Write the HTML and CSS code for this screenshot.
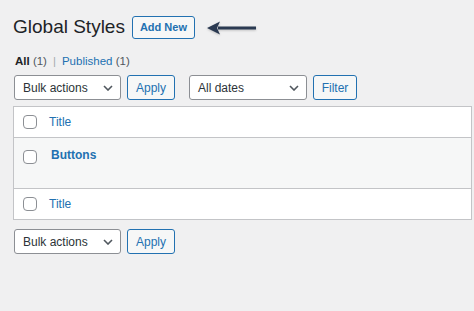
FILE: index.html
```html
<!DOCTYPE html>
<html lang="en">
<head>
  <meta charset="UTF-8" />
  <title>Global Styles</title>
  <link rel="stylesheet" href="styles.css">
</head>
<body>
  <div class="wrap">
    <div class="page-head">
      <h1>Global Styles</h1>
      <a class="btn add-new" href="#">Add New</a>
      <svg class="arrow" width="52" height="16" viewBox="0 0 52 16">
        <path d="M50 8 H12" stroke="#2b3a52" stroke-width="3.2" fill="none"/>
        <path d="M1 8 L14 1.5 L11 8 L14 14.5 Z" fill="#2b3a52"/>
      </svg>
    </div>

    <ul class="subsubsub">
      <li class="current">All <span class="count">(1)</span></li>
      <li class="sep">|</li>
      <li><a href="#">Published</a> <span class="count">(1)</span></li>
    </ul>

    <div class="tablenav">
      <div class="select bulk">
        <span>Bulk actions</span>
        <svg width="10" height="6" viewBox="0 0 10 6"><path d="M1 1 L5 5 L9 1" stroke="#50575e" stroke-width="1.6" fill="none"/></svg>
      </div>
      <button class="btn apply">Apply</button>
      <div class="select dates">
        <span>All dates</span>
        <svg width="10" height="6" viewBox="0 0 10 6"><path d="M1 1 L5 5 L9 1" stroke="#50575e" stroke-width="1.6" fill="none"/></svg>
      </div>
      <button class="btn filter">Filter</button>
    </div>

    <div class="list-table">
      <div class="row head">
        <span class="check"></span>
        <a href="#">Title</a>
      </div>
      <div class="row item">
        <span class="check"></span>
        <a class="row-title" href="#">Buttons</a>
      </div>
      <div class="row foot">
        <span class="check"></span>
        <a href="#">Title</a>
      </div>
    </div>

    <div class="tablenav bottom">
      <div class="select bulk">
        <span>Bulk actions</span>
        <svg width="10" height="6" viewBox="0 0 10 6"><path d="M1 1 L5 5 L9 1" stroke="#50575e" stroke-width="1.6" fill="none"/></svg>
      </div>
      <button class="btn apply">Apply</button>
    </div>
  </div>
</body>
</html>
```

FILE: styles.css
```css
body {
  margin: 0;
  background: #f0f0f1;
  color: #1d2327;
  font-family: "Liberation Sans", Arial, sans-serif;
  font-size: 12px;
  height: 311px;
  overflow: hidden;
}

a {
  color: #2271b1;
  text-decoration: none;
}

.wrap {
  padding: 16px 0 0 13px;
}

.page-head {
  display: flex;
  align-items: center;
  height: 22px;
}

.page-head h1 {
  margin: 0;
  font-size: 19px;
  font-weight: 400;
  line-height: 22px;
}

.btn {
  display: inline-flex;
  align-items: center;
  justify-content: center;
  box-sizing: border-box;
  height: 25px;
  padding: 0 9px;
  border: 1px solid #2271b1;
  border-radius: 3px;
  background: #f6f7f7;
  color: #2271b1;
  font-family: inherit;
  font-size: 12px;
}

.add-new {
  width: 63px;
  height: 23px;
  margin-left: 7px;
  padding: 0;
  font-size: 11px;
  font-weight: 700;
}

.arrow {
  margin-left: 11px;
  margin-top: 2px;
  filter: drop-shadow(0 1px 1px rgba(0, 0, 0, 0.2));
}

.subsubsub {
  display: flex;
  gap: 5px;
  list-style: none;
  margin: 15px 0 0 2px;
  padding: 0;
  font-size: 11.5px;
  line-height: 16px;
}

.subsubsub .current {
  font-weight: 700;
}

.subsubsub .count {
  color: #50575e;
  font-weight: 400;
}

.subsubsub .sep {
  color: #a7aaad;
  margin: 0 1px;
}

.tablenav {
  display: flex;
  gap: 6px;
  margin: 6px 0 0 1px;
}

.select {
  display: flex;
  align-items: center;
  justify-content: space-between;
  box-sizing: border-box;
  height: 25px;
  padding: 0 7px 0 8px;
  border: 1px solid #8c8f94;
  border-radius: 3px;
  background: #fff;
  color: #2c3338;
}

.bulk {
  width: 107px;
}

.dates {
  width: 118px;
  margin-left: 8px;
}

.tablenav .apply {
  width: 48px;
}

.tablenav .filter {
  width: 44px;
}

.list-table {
  margin-top: 6px;
  margin-right: 2px;
  border: 1px solid #c3c4c7;
  background: #fff;
}

.row {
  display: flex;
  align-items: center;
  gap: 12px;
  height: 30px;
  padding-left: 9px;
}

.row.item {
  align-items: flex-start;
  height: 50px;
  background: #f6f7f7;
  border-top: 1px solid #c3c4c7;
  border-bottom: 1px solid #c3c4c7;
}

.row.item .check {
  margin-top: 12px;
}

.row-title {
  margin-top: 8px;
  margin-left: 2px;
  font-weight: 700;
  line-height: 18px;
}

.check {
  box-sizing: border-box;
  width: 14px;
  height: 14px;
  border: 1px solid #8c8f94;
  border-radius: 4px;
  background: #fff;
}

.tablenav.bottom {
  margin-top: 9px;
}
```
